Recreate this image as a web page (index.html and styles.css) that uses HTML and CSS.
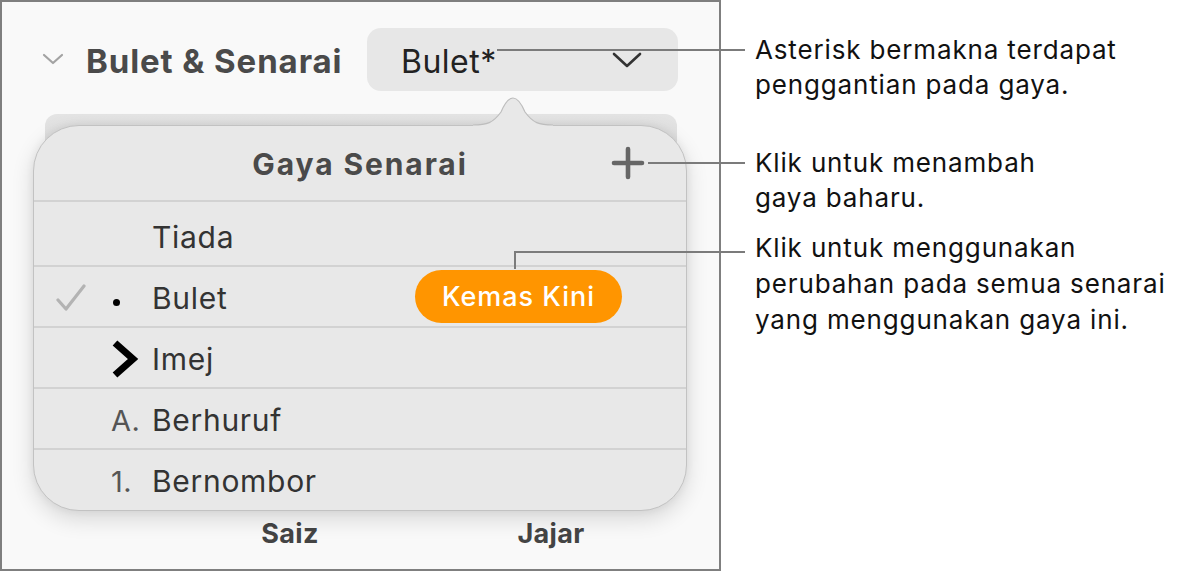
FILE: index.html
```html
<!DOCTYPE html>
<html lang="ms">
<head>
<meta charset="utf-8">
<title>Bulet &amp; Senarai</title>
<link rel="stylesheet" href="styles.css">
</head>
<body>
<div class="stage">
  <div class="panel">
    <div class="head-row">
      <svg class="disclosure" width="22" height="14" viewBox="0 0 22 14"><path d="M2 3 L11 11 L20 3" fill="none" stroke="#a3a3a3" stroke-width="2.2" stroke-linecap="round" stroke-linejoin="round"/></svg>
      <span class="section-title">Bulet &amp; Senarai</span>
      <div class="dropdown">
        <span class="dropdown-value">Bulet*</span>
        <svg width="30" height="18" viewBox="0 0 30 18"><path d="M2 3 L15 15 L28 3" fill="none" stroke="#333" stroke-width="2.6" stroke-linecap="round" stroke-linejoin="round"/></svg>
      </div>
    </div>

    <div class="pop-wrap">
      <div class="ghost"></div>
      <div class="popover">
        <svg class="arrow" width="80" height="31" viewBox="0 0 80 31">
          <path d="M0 29 C14 29 20 27 28 16 Q34 2 40 2 Q46 2 52 16 C60 27 66 29 80 29 L80 31 L0 31 Z" fill="#e8e8e8"/>
          <path d="M0 29 C14 29 20 27 28 16 Q34 2 40 2 Q46 2 52 16 C60 27 66 29 80 29" fill="none" stroke="#bdbdbd" stroke-width="1.2"/>
        </svg>
        <div class="pop-head">
          <span class="pop-title">Gaya Senarai</span>
          <svg class="plus" width="34" height="34" viewBox="0 0 34 34"><path d="M17 3 V31 M3 17 H31" stroke="#666" stroke-width="4.6" stroke-linecap="round"/></svg>
        </div>
        <div class="row row-first">
          <span class="check"></span>
          <span class="marker"></span>
          <span class="label">Tiada</span>
        </div>
        <div class="row">
          <span class="check"><svg width="30" height="28" viewBox="0 0 30 28"><path d="M2 16 L10 25 L28 2" fill="none" stroke="#b3b3b3" stroke-width="3.2" stroke-linecap="round" stroke-linejoin="round"/></svg></span>
          <span class="marker"><span class="dot"></span></span>
          <span class="label">Bulet</span>
          <span class="update">Kemas Kini</span>
        </div>
        <div class="row">
          <span class="check"></span>
          <span class="marker"><svg width="28" height="40" viewBox="0 0 28 40"><path d="M4 4 L22 20 L4 36" fill="none" stroke="#000" stroke-width="7" stroke-linejoin="miter"/></svg></span>
          <span class="label">Imej</span>
        </div>
        <div class="row">
          <span class="check"></span>
          <span class="marker marker-text">A.</span>
          <span class="label">Berhuruf</span>
        </div>
        <div class="row row-last">
          <span class="check"></span>
          <span class="marker marker-text">1.</span>
          <span class="label">Bernombor</span>
        </div>
      </div>
    </div>

    <div class="foot-row">
      <span class="foot-label">Saiz</span>
      <span class="foot-label">Jajar</span>
    </div>
  </div>

  <div class="notes">
    <p class="note note-1">Asterisk bermakna terdapat<br>penggantian pada gaya.</p>
    <p class="note note-2">Klik untuk menambah<br>gaya baharu.</p>
    <p class="note note-3">Klik untuk menggunakan<br>perubahan pada semua senarai<br>yang menggunakan gaya ini.</p>
  </div>

  <div class="leader leader-1"></div>
  <div class="leader leader-2"></div>
  <div class="leader leader-3v"></div>
  <div class="leader leader-3h"></div>
</div>
</body>
</html>
```

FILE: styles.css
```css
* { box-sizing: border-box; }

html, body {
  margin: 0;
  padding: 0;
  background: #ffffff;
}

body {
  font-family: Inter, "Noto Sans", "Liberation Sans", sans-serif;
  width: 1178px;
  height: 572px;
  overflow: hidden;
}

.stage {
  position: relative;
  display: flex;
  align-items: flex-start;
  width: 1178px;
  height: 572px;
}

.panel {
  width: 721px;
  height: 571px;
  border: 2px solid #7f7f7f;
  background: #f9f9f9;
  display: flex;
  flex-direction: column;
  flex-shrink: 0;
}

/* header row */
.head-row {
  display: flex;
  align-items: center;
  height: 63px;
  margin-top: 26px;
  padding-left: 40px;
  padding-right: 41px;
}

.disclosure {
  margin-right: 22px;
  margin-top: -2px;
}

.section-title {
  font-size: 33px;
  font-weight: 700;
  color: #4a4a4a;
  letter-spacing: 0.9px;
  margin-top: 3px;
}

.dropdown {
  margin-left: auto;
  width: 311px;
  height: 63px;
  background: #e7e7e7;
  border-radius: 14px;
  display: flex;
  align-items: center;
  justify-content: space-between;
  padding: 0 36px 0 34px;
}

.dropdown-value {
  font-size: 32px;
  color: #222;
  letter-spacing: 0.5px;
  margin-top: 3px;
}

/* popover */
.pop-wrap {
  position: relative;
  margin-top: 34px;
  margin-left: 31px;
  width: 654px;
}

.ghost {
  position: absolute;
  left: 12px;
  top: -11px;
  width: 632px;
  height: 60px;
  border-radius: 12px;
  background: linear-gradient(#e4e4e4, #d8d8d8);
}

.popover {
  position: relative;
  width: 654px;
  height: 386px;
  background: #e8e8e8;
  border: 1px solid #c2c2c2;
  border-radius: 46px;
  box-shadow: 0 8px 22px rgba(0, 0, 0, 0.14), 0 0 8px rgba(0, 0, 0, 0.06);
}

.arrow {
  position: absolute;
  left: 439px;
  top: -30px;
}

.pop-head {
  position: relative;
  height: 76px;
  border-bottom: 2px solid #d2d2d2;
  display: flex;
  align-items: center;
  justify-content: center;
}

.pop-title {
  font-size: 30px;
  font-weight: 700;
  color: #4a4a4a;
  letter-spacing: 1.9px;
  margin-top: 2px;
}

.plus {
  position: absolute;
  right: 41px;
  top: 20px;
}

.row {
  display: flex;
  align-items: center;
  height: 61px;
  border-bottom: 2px solid #d2d2d2;
  padding-left: 22px;
  padding-top: 3px;
}

.row-first { height: 65px; padding-top: 6px; }
.row-last { height: 59px; border-bottom: none; }

.check {
  width: 30px;
  display: flex;
  align-items: center;
}

.marker {
  width: 41px;
  margin-left: 25px;
  display: flex;
  align-items: center;
}

.dot {
  width: 7px;
  height: 7px;
  border-radius: 50%;
  background: #000;
  margin-left: 2px;
  margin-top: 8px;
}

.marker-text {
  font-size: 29px;
  color: #555;
  letter-spacing: 0.5px;
}

.label {
  font-size: 30px;
  color: #333;
  letter-spacing: 0.7px;
}

.update {
  margin-left: auto;
  margin-right: 64px;
  margin-top: -3px;
  height: 53px;
  width: 207px;
  border-radius: 27px;
  background: #ff9500;
  color: #fff;
  font-size: 27px;
  font-weight: 500;
  display: flex;
  align-items: center;
  justify-content: center;
  letter-spacing: 1px;
}

/* footer labels */
.foot-row {
  display: flex;
  margin-top: 6px;
  padding-left: 188px;
  gap: 61px;
}

.foot-label {
  width: 200px;
  text-align: center;
  font-size: 27px;
  font-weight: 700;
  color: #444;
  letter-spacing: 0.3px;
}

/* annotations */
.notes {
  margin-left: 34px;
  display: flex;
  flex-direction: column;
}

.note {
  margin: 0;
  font-size: 26px;
  line-height: 35px;
  color: #111;
  letter-spacing: 0.85px;
}

.note-1 { margin-top: 32px; }
.note-2 { margin-top: 43px; }
.note-3 { margin-top: 15px; line-height: 36px; }

.leader {
  position: absolute;
  background: #7b7b7b;
}

.leader-1 { left: 497px; top: 49px; width: 248px; height: 2px; }
.leader-2 { left: 648px; top: 162px; width: 97px; height: 2px; }
.leader-3v { left: 514px; top: 251px; width: 2px; height: 18px; }
.leader-3h { left: 514px; top: 251px; width: 231px; height: 2px; }
```
